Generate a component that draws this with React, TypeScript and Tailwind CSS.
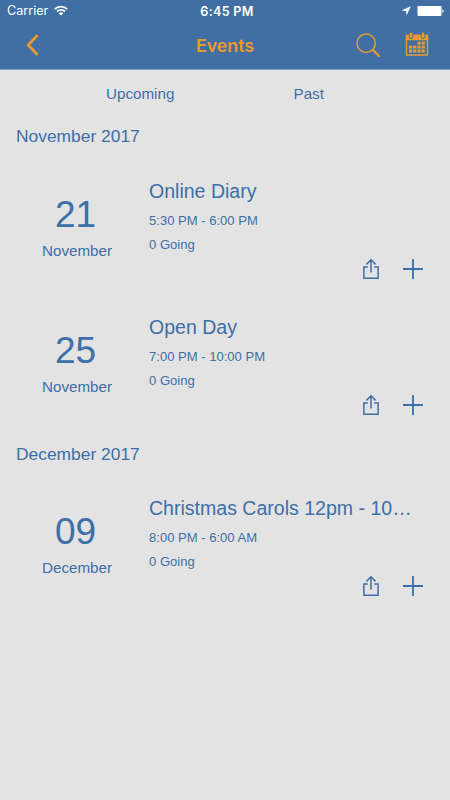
interface IEvent {
  day: string;
  month: string;
  title: string;
  time: string;
  going: number;
}

interface ISection {
  label: string;
  events: IEvent[];
}

const sections: ISection[] = [
  {
    label: "November 2017",
    events: [
      { day: "21", month: "November", title: "Online Diary", time: "5:30 PM - 6:00 PM", going: 0 },
      { day: "25", month: "November", title: "Open Day", time: "7:00 PM - 10:00 PM", going: 0 },
    ],
  },
  {
    label: "December 2017",
    events: [
      { day: "09", month: "December", title: "Christmas Carols 12pm - 10…", time: "8:00 PM - 6:00 AM", going: 0 },
    ],
  },
];

export default function App() {
  return (
    <div className="w-[450px] h-[800px] overflow-hidden bg-[#e3e3e3] text-[#3d6fa8] font-['Liberation_Sans',Arial,sans-serif]">
      <header className="h-[70px] bg-[#416fa4] border-b border-[#7f9dc0] font-[Inter,sans-serif]">
        <StatusBar />
        <NavBar />
      </header>
      <div className="flex h-11 items-start pt-[15px] text-[15.2px] leading-[18px]">
        <button className="ml-[106px] w-[68px] text-left">Upcoming</button>
        <button className="ml-[119.5px] w-8 text-left">Past</button>
      </div>
      {sections.map((section) => (
        <section key={section.label}>
          <h2 className="h-[45.5px] pl-4 text-[17.4px] leading-[44px]">
            {section.label}
          </h2>
          {section.events.map((event) => (
            <EventRow key={event.day} event={event} />
          ))}
        </section>
      ))}
    </div>
  );
}

function StatusBar() {
  return (
    <div className="grid h-[22px] grid-cols-3 items-center pl-[7px] pr-[6px] text-[12.6px] text-white">
      <div className="flex items-center gap-[6px]">
        <span className="pt-px">Carrier</span>
        <svg className="mb-[1px]" width="14" height="11" viewBox="0 0 14 11" fill="none" stroke="white" strokeWidth="1.8">
          <path d="M0.8 4.1a8.8 8.8 0 0 1 12.4 0" />
          <path d="M3 6.5a5.7 5.7 0 0 1 8 0" />
          <path d="M7 10.6 4.7 8.3a3.3 3.3 0 0 1 4.6 0z" fill="white" stroke="none" />
        </svg>
      </div>
      <span className="pl-[3px] pt-[2px] text-center font-semibold tracking-[0.3px]">6:45 PM</span>
      <div className="flex items-center justify-end gap-[6px]">
        <svg width="10" height="10" viewBox="0 0 10 10" fill="white">
          <path d="M9.8 0.2 5.5 9.6 5.1 5 0.4 4.6z" />
        </svg>
        <svg width="27" height="12" viewBox="0 0 27 12" fill="white">
          <rect x="0.5" y="1" width="24" height="10" rx="1" />
          <path d="M25.3 4.2q1.4 0.4 1.4 1.8t-1.4 1.8z" />
        </svg>
      </div>
    </div>
  );
}

function NavBar() {
  return (
    <nav className="grid h-[47px] grid-cols-3 items-center pl-[26px] pr-[21px] text-[#ec9a29]">
      <svg className="-mt-px" width="14" height="24" viewBox="0 0 14 24" fill="none" stroke="currentColor" strokeWidth="2.8">
        <path d="M11.5 2.2 2.2 12l9.3 9.8" />
      </svg>
      <h1 className="-ml-[5px] pt-[2px] text-center text-[17.8px] font-semibold">Events</h1>
      <div className="flex items-center justify-end gap-6">
        <svg width="25" height="25" viewBox="0 0 25 25" fill="none" stroke="currentColor">
          <circle cx="10.2" cy="10.2" r="9.2" strokeWidth="1.5" />
          <path d="m16.8 16.8 7 7" strokeWidth="2" />
        </svg>
        <CalendarIcon />
      </div>
    </nav>
  );
}

function CalendarIcon() {
  // dots of the month grid, the first row starts late
  const dots = [
    [12.4, 9.6], [16.6, 9.6],
    [4, 13.6], [8.2, 13.6], [12.4, 13.6], [16.6, 13.6],
    [4, 17.6], [8.2, 17.6], [12.4, 17.6], [16.6, 17.6],
  ];

  return (
    <svg className="-mt-[3px]" width="24" height="24" viewBox="0 0 24 24" fill="currentColor">
      <path d="M0.8 2.6h2.9v2a2.3 2.3 0 0 0 4.6 0v-2h7.4v2a2.3 2.3 0 0 0 4.6 0v-2h2.9v5.6H0.8z" />
      <rect x="4.6" y="0.4" width="2.8" height="5.6" rx="1.4" />
      <rect x="16.6" y="0.4" width="2.8" height="5.6" rx="1.4" />
      <path d="M1.5 6v17h21V6" fill="none" stroke="currentColor" strokeWidth="1.4" />
      {dots.map(([x, y]) => (
        <rect key={`${x}-${y}`} x={x} y={y} width="3.2" height="3" />
      ))}
    </svg>
  );
}

function EventRow({ event }: { event: IEvent }) {
  return (
    <article className="flex h-[136px]">
      <div className="w-[149px] pl-[5px] pt-[34px] text-center">
        <p className="-ml-[3px] text-[37px] leading-[42px]">{event.day}</p>
        <p className="mt-[6px] text-[15.2px] leading-[18px]">{event.month}</p>
      </div>
      <div className="w-[301px] pr-[27px] pt-[19px]">
        <h3 className="whitespace-nowrap text-[19.55px] leading-6">{event.title}</h3>
        <p className="mt-[10px] text-[13.05px] leading-4">{event.time}</p>
        <p className="mt-2 text-[13.05px] leading-4">{event.going} Going</p>
        <div className="mt-[5px] flex items-center justify-end gap-[23px]">
          <svg width="18" height="22" viewBox="0 0 18 22" fill="none" stroke="currentColor" strokeWidth="1.5">
            <path d="M5.8 9H1.9v11.3h14.2V9h-3.9" />
            <path d="M9 14.5V1.8M4.4 6.4 9 1.8l4.6 4.6" />
          </svg>
          <svg width="20" height="20" viewBox="0 0 20 20" fill="none" stroke="currentColor" strokeWidth="1.8">
            <path d="M10 0v20M0 10h20" />
          </svg>
        </div>
      </div>
    </article>
  );
}
